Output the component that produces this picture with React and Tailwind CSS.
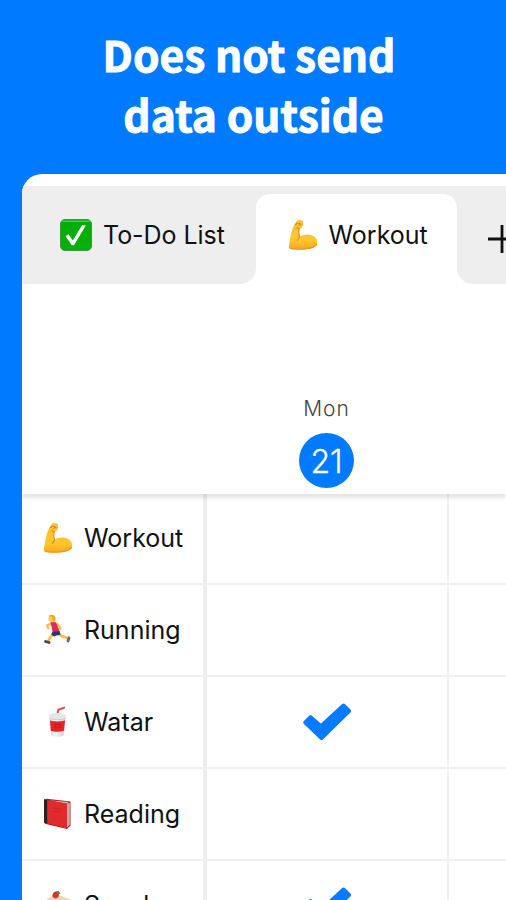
import React from 'react'

const rows = [
  { icon: Muscle, name: 'Workout', done: false },
  { icon: Runner, name: 'Running', done: false },
  { icon: Cup, name: 'Watar', done: true },
  { icon: Book, name: 'Reading', done: false },
  { icon: Cake, name: 'Snack', done: true },
]

function CheckBox() {
  return (
    <svg viewBox="0 0 32 32" className="h-8 w-8 shrink-0">
      <defs>
        <linearGradient id="box" x1="0" y1="0" x2="0" y2="1">
          <stop offset="0" stopColor="#18b51b" />
          <stop offset="0.12" stopColor="#05ad0b" />
          <stop offset="1" stopColor="#08b00d" />
        </linearGradient>
      </defs>
      <rect x="0.5" y="0.5" width="31" height="31" rx="4.5" fill="url(#box)" stroke="#2f9e35" />
      <path d="M3 2.3h26" stroke="#55c456" strokeWidth="1.2" strokeLinecap="round" />
      <path d="M5.6 17.2l3-2 4.2 6.2L22.2 6l3.6.4L14 26.2h-2.2z" fill="#fff" />
    </svg>
  )
}

function Muscle() {
  return (
    <svg viewBox="0 0 30 32" className="h-8 w-[30px] shrink-0">
      <defs>
        <linearGradient id="arm" x1="0" y1="0" x2="0" y2="1">
          <stop offset="0" stopColor="#fcbf35" />
          <stop offset="0.7" stopColor="#ffc62d" />
          <stop offset="1" stopColor="#f3a51e" />
        </linearGradient>
      </defs>
      <path
        d="M8 3C9 .8 12 .3 14 1.6c1.5 1 1.5 3.2.8 5.2-.5 1.6-1.8 3-3.6 2.8-.7 2.8-.6 5.6.4 8.200C14 16 17 15.400 20 15.500c5 .2 9 3.500 9.200 7.200.2 4.400-4.200 6.600-9.200 7.300-6 .9-12.500 1-18 0C.8 29.500.8 27 1.200 25c.7-4 1.200-7 2-10.500C4.200 10 5.500 6.500 8 3z"
        fill="url(#arm)"
      />
      <path d="M7.500 5.500c2-1.800 4-1.600 5.600.3M8.800 8.800l2.400.8c-.7 3-.6 5.700.4 8.200l-2.200 3.700" fill="none" stroke="#d58a18" strokeWidth="1.100" strokeLinecap="round" />
      <path d="M11 4.200l1.300 1.500-1.800.8" fill="none" stroke="#d98b16" />
      <path d="M2 29.500c7 1 16 .8 21-.6 3-.8 5-2.200 5.800-4.200" fill="none" stroke="#e9981c" strokeWidth="1.200" />
    </svg>
  )
}

function Runner() {
  return (
    <svg viewBox="0 0 30 32" className="h-8 w-[30px] shrink-0">
      <g fill="none" strokeLinecap="round" strokeLinejoin="round">
        <path d="M8.500 9.500l-4.300 1.800 1 3" stroke="#ffc13a" strokeWidth="2.300" />
        <path d="M14.500 10l3 4.200-2.500 1.800" stroke="#ffc13a" strokeWidth="2.300" />
        <path d="M10 20.500l-3 3.300-2 3.500" stroke="#ffbc34" strokeWidth="2.600" />
        <path d="M15 20l5 2.600 4.500 1.400" stroke="#ffbc34" strokeWidth="2.600" />
        <path d="M2.500 27.500l3.600 1" stroke="#454549" strokeWidth="2.800" />
        <path d="M26 23.800l-1 3.200" stroke="#6a686b" strokeWidth="2.800" />
      </g>
      <path d="M7.500 8l5.500.2 3.500 9.300-6.800 1z" fill="#e9265b" />
      <path d="M9.500 17.800l7-.8 1.200 3.600-4.200 1-2.500.8-2.800-1.800z" fill="#233a78" />
      <circle cx="9" cy="4.800" r="3.500" fill="#ffcb49" />
      <path d="M5.500 2C8-.3 12 .7 12.500 4c.2 2-.5 3.500-2 4L9.300 3.400z" fill="#f2aa20" />
    </svg>
  )
}

function Cup() {
  return (
    <svg viewBox="0 0 30 32" className="h-8 w-[30px] shrink-0">
      <defs>
        <linearGradient id="cup" x1="0" x2="1">
          <stop offset="0" stopColor="#d8d8d8" />
          <stop offset="0.4" stopColor="#f4f4f4" />
          <stop offset="1" stopColor="#c9cacb" />
        </linearGradient>
      </defs>
      <path d="M14.500 8l.8-4.200L22 1.300" fill="none" stroke="#df4a4e" strokeWidth="1.900" />
      <path d="M6.500 11h15.800l-1.700 18.500c-3.500 1.700-9.500 1.700-12.400 0z" fill="url(#cup)" />
      <path d="M7 14.500c4 1.200 11 1.200 15 0l-1 10.200c-4 1.500-9.500 1.500-13.200 0z" fill="#e32428" />
      <path d="M11 18.500h7M11 21h7" stroke="#c9151a" />
      <path d="M6 9.500c1-3.500 15.500-3.500 17 0v3c-4 1.800-13 1.800-17 0z" fill="#e5e6e6" />
      <path d="M6 12.300c4 1.800 13 1.800 17 0" fill="none" stroke="#cfd0d1" />
    </svg>
  )
}

function Book() {
  return (
    <svg viewBox="0 0 30 32" className="h-8 w-[30px] shrink-0">
      <path d="M1 1.500L3.500.8 27.500 3.500v24L24 31 2 25.800 1 24z" fill="#a31f22" />
      <path d="M24 6l2.800-1.500v22.300L23.500 30z" fill="#d3a9a3" />
      <path d="M6 2.200l19.500 1.800L24 6z" fill="#d5b0a0" />
      <path d="M4 2.200L24 5.500v25L4 25.300z" fill="#e02a2b" />
      <path d="M1 1.500l3.200.8v23.200l-3.200-1z" fill="#252326" />
      <path d="M10 10l8 1.300M11 13l6 .9" stroke="#c92226" />
    </svg>
  )
}

function Cake() {
  return (
    <svg viewBox="0 0 30 32" className="h-8 w-[30px] shrink-0">
      <path d="M1 12L12 4l16 6v15L8 29 1 24z" fill="#efd28f" />
      <path d="M1 12L12 3.500 28 10 9 16z" fill="#e4d9bd" />
      <path d="M1 18l8 3 19-5v3L9 24l-8-3z" fill="#d83c3a" />
      <path d="M9.500 5.500c0-3 2-4.500 4.500-3.500 2.500 1 2.500 4.500.3 5.800C12 8.800 9.500 8 9.500 5.500z" fill="#dc3028" />
      <path d="M12 1.800l3.500-1 2 3-2.200.8z" fill="#6f8040" />
    </svg>
  )
}

function Check() {
  return (
    <svg viewBox="0 0 48 38" className="mt-px h-[38px] w-12">
      <path
        d="M7.600 14.200L18 23.300 40.500 2.500 46 8 18.500 35 2.300 19.500z"
        fill="#077aff"
        stroke="#077aff"
        strokeWidth="4"
        strokeLinejoin="round"
      />
    </svg>
  )
}

function Tabs() {
  return (
    <div className="relative z-20 mt-3 flex h-[98px] w-[484px] shrink-0 bg-white text-[25px]">
      <div className="flex w-[233.5px] shrink-0 items-center rounded-br-[16px] bg-[#eee] pl-[38px]">
        <CheckBox />
        <span className="ml-[11px] pt-0.5 tracking-[-0.05px]">To-Do List</span>
      </div>
      <div className="w-[201.5px] shrink-0 bg-linear-to-b from-[#eee] from-50% to-white to-50% pt-2">
        <div className="flex h-[90px] items-center rounded-t-[14px] bg-white pb-2 pl-8">
          <Muscle />
          <span className="ml-[11px] pt-0.5">Workout</span>
        </div>
      </div>
      <div className="flex flex-1 items-center rounded-bl-[16px] bg-[#eee] pt-2 pl-[31px]">
        <svg viewBox="0 0 28 28" className="h-7 w-7 shrink-0">
          <path d="M0 14h28M14 0v28" stroke="#111" strokeWidth="2.800" />
        </svg>
      </div>
    </div>
  )
}

export default function App() {
  return (
    <main
      className="flex h-[900px] w-[506px] flex-col overflow-hidden bg-[#007aff] text-[#111]"
      style={{ fontFamily: 'Inter, "Liberation Sans", sans-serif' }}
    >
      <h1
        className="h-[174px] shrink-0 pt-[24px] pr-2 text-center text-[42.5px] leading-[60px] font-bold text-white [-webkit-text-stroke:0.9px_white]"
        style={{ fontFamily: '"Noto Sans CJK JP", sans-serif' }}
      >
        Does not send
        <br />
        <span className="pl-[9px]">data outside</span>
      </h1>

      <section className="ml-[22px] flex w-[484px] flex-1 flex-col overflow-hidden rounded-tl-[20px] bg-white">
        <Tabs />

        <div className="relative z-10 flex h-[209.5px] shrink-0 flex-col items-center bg-white pt-[111px] shadow-[0_4px_4px_rgba(0,0,0,0.11)]">
          <div className="ml-[125px] w-[484px] text-center text-[21px] leading-7 font-light tracking-[1px] text-[#444]">Mon</div>
          <div className="mt-[10px] ml-[125px] flex h-[55px] w-[55px] items-center justify-center rounded-full bg-[#007aff] pt-0.5 text-[32px] font-light text-white [-webkit-text-stroke:0.3px_white]">
            21
          </div>
        </div>

        {rows.map(({ icon: Icon, name, done }) => (
          <div key={name} className="flex h-[91.8px] shrink-0 text-[25px]">
            <div className="flex w-[185px] items-center border-r-[4px] border-b-2 border-r-[#eee] border-b-[#f1f1f1] pl-[21px]">
              <Icon />
              <span className="ml-[11px] pt-px">{name}</span>
            </div>
            <div className="flex w-[242px] items-center justify-center border-r-2 border-b-2 border-[#f1f1f1]">
              {done && <Check />}
            </div>
            <div className="flex-1 border-b-2 border-[#f1f1f1]" />
          </div>
        ))}
      </section>
    </main>
  )
}
